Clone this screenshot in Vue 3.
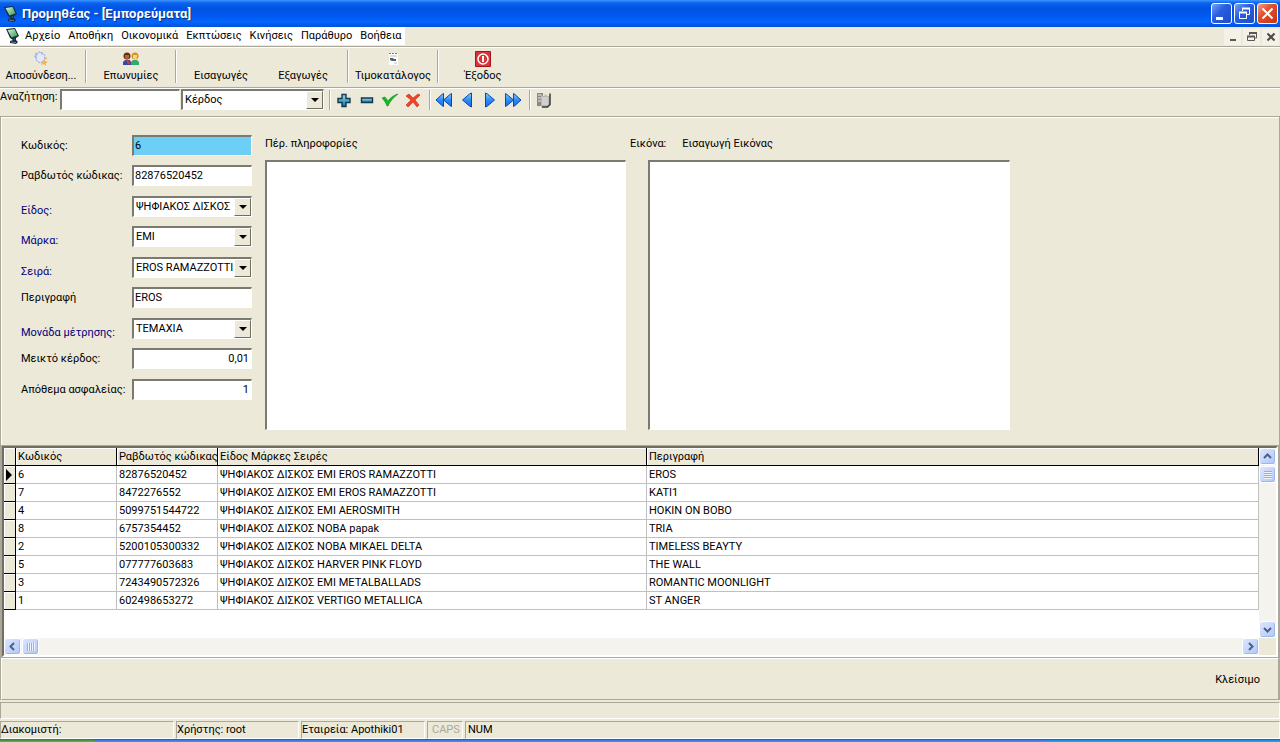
<script setup>
import { ref } from 'vue'

const menus = ['Αρχείο', 'Αποθήκη', 'Οικονομικά', 'Εκπτώσεις', 'Κινήσεις', 'Παράθυρο', 'Βοήθεια']

const search = ref('')
const searchField = ref('Κέρδος')

const fields = ref([
  { id: 'code', label: 'Κωδικός:', value: '6', kind: 'text', tone: 'active' },
  { id: 'barcode', label: 'Ραβδωτός κώδικας:', value: '82876520452', kind: 'text' },
  { id: 'type', label: 'Είδος:', value: 'ΨΗΦΙΑΚΟΣ ΔΙΣΚΟΣ', kind: 'select' },
  { id: 'brand', label: 'Μάρκα:', value: 'EMI', kind: 'select' },
  { id: 'series', label: 'Σειρά:', value: 'EROS RAMAZZOTTI', kind: 'select' },
  { id: 'description', label: 'Περιγραφή', value: 'EROS', kind: 'text' },
  { id: 'unit', label: 'Μονάδα μέτρησης:', value: 'ΤΕΜΑΧΙΑ', kind: 'select' },
  { id: 'profit', label: 'Μεικτό κέρδος:', value: '0,01', kind: 'text', tone: 'number' },
  { id: 'stock', label: 'Απόθεμα ασφαλείας:', value: '1', kind: 'text', tone: 'number' }
])
const notes = ref('')

const rows = [
  ['6', '82876520452', 'ΨΗΦΙΑΚΟΣ ΔΙΣΚΟΣ EMI EROS RAMAZZOTTI', 'EROS'],
  ['7', '8472276552', 'ΨΗΦΙΑΚΟΣ ΔΙΣΚΟΣ EMI EROS RAMAZZOTTI', 'KATI1'],
  ['4', '5099751544722', 'ΨΗΦΙΑΚΟΣ ΔΙΣΚΟΣ EMI AEROSMITH', 'HOKIN ON BOBO'],
  ['8', '6757354452', 'ΨΗΦΙΑΚΟΣ ΔΙΣΚΟΣ NOBA papak', 'TRIA'],
  ['2', '5200105300332', 'ΨΗΦΙΑΚΟΣ ΔΙΣΚΟΣ NOBA MIKAEL DELTA', 'TIMELESS BEAYTY'],
  ['5', '077777603683', 'ΨΗΦΙΑΚΟΣ ΔΙΣΚΟΣ HARVER PINK FLOYD', 'THE WALL'],
  ['3', '7243490572326', 'ΨΗΦΙΑΚΟΣ ΔΙΣΚΟΣ EMI METALBALLADS', 'ROMANTIC MOONLIGHT'],
  ['1', '602498653272', 'ΨΗΦΙΑΚΟΣ ΔΙΣΚΟΣ VERTIGO METALLICA', 'ST ANGER']
]
const selected = ref(0)
</script>

<template>
  <div class="window">
    <svg class="defs" aria-hidden="true">
      <defs>
        <linearGradient id="screen" x1="0" y1="0" x2="1" y2="1">
          <stop offset="0" stop-color="#d8f5dc" />
          <stop offset="1" stop-color="#2f9a58" />
        </linearGradient>
        <linearGradient id="steel" x1="0" y1="0" x2="0" y2="1">
          <stop offset="0" stop-color="#9fe0f4" />
          <stop offset="1" stop-color="#176a94" />
        </linearGradient>
        <linearGradient id="azure" x1="0" y1="0" x2="0" y2="1">
          <stop offset="0" stop-color="#8cd0ff" />
          <stop offset=".5" stop-color="#2c8cf5" />
          <stop offset="1" stop-color="#1a6ae8" />
        </linearGradient>
        <symbol id="logo" viewBox="0 0 16 16">
          <path d="M1 1 L10 0 L14 8 L11 10 L11 12 L13 14 L11 16 L5 15 L5 13 L8 12 L5 10 Z" fill="#1c2a35" />
          <path d="M2.500 2 L9.500 1 L12.500 7.500 L6.500 9.500 Z" fill="url(#screen)" />
          <path d="M6 14 L11 14.500" stroke="#5f86a8" />
          <path d="M9 10 L10 12" stroke="#3e6288" />
        </symbol>
      </defs>
    </svg>

    <header class="title">
      <svg class="logo"><use href="#logo" /></svg>
      <h1>Προμηθέας - [Εμπορεύματα]</h1>
      <div class="caption">
        <button aria-label="Ελαχιστοποίηση"><svg viewBox="0 0 19 19"><path d="M4 13h7v3h-7z" fill="#fff" /></svg></button>
        <button aria-label="Επαναφορά"><svg viewBox="0 0 19 19" fill="none" stroke="#fff"><path d="M7.500 7V4.500h7v6H12" /><path d="M7 4.500h8" stroke-width="2" /><path d="M4.500 8.500h7v6h-7z" /><path d="M4 8.500h8" stroke-width="2" /></svg></button>
        <button class="close" aria-label="Κλείσιμο παραθύρου"><svg viewBox="0 0 19 19"><path d="M4.500 4.500l10 10M14.500 4.500l-10 10" stroke="#fff" stroke-width="2" /></svg></button>
      </div>
    </header>

    <nav class="menubar">
      <div class="menus">
        <svg class="logo"><use href="#logo" /></svg>
        <button v-for="m in menus" :key="m">{{ m }}</button>
      </div>
      <div class="mdi">
        <button aria-label="Ελαχιστοποίηση εγγράφου"><svg viewBox="0 0 16 16"><path d="M5 10h6v2h-6z" fill="#5a5a55" /></svg></button>
        <button aria-label="Επαναφορά εγγράφου"><svg viewBox="0 0 16 16" fill="none" stroke="#5a5a55"><path d="M5.500 6V4h7v5H11M3.500 7.500h7v4h-7z" /><path d="M5 4h8M3 7.500h8" stroke-width="2" /></svg></button>
        <button aria-label="Κλείσιμο εγγράφου"><svg viewBox="0 0 16 16"><path d="M4.500 4.500l7 7M11.500 4.500l-7 7" stroke="#4a4a46" stroke-width="2" /></svg></button>
      </div>
    </nav>

    <div class="toolbar" role="toolbar" aria-label="Κύρια εργαλεία">
      <button>
        <svg viewBox="0 0 16 16"><path d="M3 3l3-2 4 1 2 3-1 5-4 2-4-3z" fill="#e3e9fb" stroke="#8797dc" stroke-dasharray="2 1" /><path d="M2 2l3 2M1 5l3 1M8 1l1 3" stroke="#a9b5ea" /><path d="M10 9l2 1 3 1-2 1v3l-2-2-3 1 1-2z" fill="#f7b64a" /><path d="M12 8l2-1" stroke="#e29a35" /></svg>
        <span>Αποσύνδεση...</span>
      </button>
      <i class="sep"></i>
      <button>
        <svg viewBox="0 0 16 16"><circle cx="4" cy="5" r="3.500" fill="#6b3010" /><path d="M2 4h4v3l-2 2-2-2z" fill="#a9663c" /><path d="M0 14v-3l2-2h5l1 2v3z" fill="#324ca8" /><path d="M4 9l2 4" stroke="#d83b2c" stroke-width="2" /><circle cx="12" cy="5" r="3.500" fill="#d99316" /><path d="M10 4h4v3l-2 2-2-2z" fill="#f6cd92" /><path d="M8 14v-3l2-2h4l2 2v3z" fill="#35a86b" /></svg>
        <span>Επωνυμίες</span>
      </button>
      <i class="sep"></i>
      <button><span>Εισαγωγές</span></button>
      <button><span>Εξαγωγές</span></button>
      <i class="sep"></i>
      <button>
        <svg viewBox="0 0 16 16"><path d="M4 2h9v12H4z" fill="#fff" /><path d="M4 2.500h9" stroke="#8c7f68" stroke-dasharray="2 1" /><path d="M5 5h7M9 12h3" stroke="#bbb" /><path d="M5 7h3l1 1h2v2H7L5 9z" fill="#4c6472" /></svg>
        <span>Τιμοκατάλογος</span>
      </button>
      <i class="sep"></i>
      <button>
        <svg viewBox="0 0 16 16"><rect width="16" height="16" rx="1" fill="#a8141c" /><rect x="1" y="1" width="14" height="14" fill="#d9343a" /><circle cx="8" cy="8" r="5" fill="none" stroke="#fff" stroke-width="1.500" /><path d="M8 5v6" stroke="#fff" stroke-width="2" /></svg>
        <span>Έξοδος</span>
      </button>
    </div>

    <div class="searchbar">
      <label class="search-label" for="search">Αναζήτηση:</label>
      <input id="search" v-model="search" class="box" type="text" />
      <span class="combo search-combo">
        <select v-model="searchField" class="box" aria-label="Πεδίο αναζήτησης"><option>Κέρδος</option></select>
        <i class="drop"></i>
      </span>
      <i class="sep"></i>
      <button aria-label="Προσθήκη"><svg viewBox="0 0 16 16"><path d="M6 2.500h4v4h4v4h-4v4H6v-4H2v-4h4z" fill="url(#steel)" stroke="#0d3a55" stroke-width="1.400" /></svg></button>
      <button aria-label="Διαγραφή"><svg viewBox="0 0 16 16"><path d="M2.500 6h11v4.500h-11z" fill="url(#steel)" stroke="#0d3a55" stroke-width="1.400" /></svg></button>
      <button aria-label="Αποδοχή"><svg viewBox="0 0 16 16"><path d="M0 6l3-1 3 4c3-4 6-6 10-7C12 5 8 9 6 14H5C4 11 2 8 0 6z" fill="#16b927" stroke="#0b8a1c" stroke-width=".6" /></svg></button>
      <button aria-label="Ακύρωση"><svg viewBox="0 0 16 16"><path d="M1 4l3-2 4 4 5-4 2 1-5 5 4 5-2 2-4-5-5 5-2-2 5-5z" fill="#f0442a" stroke="#c42612" stroke-width=".6" /></svg></button>
      <i class="sep"></i>
      <button aria-label="Πρώτη εγγραφή"><svg viewBox="0 0 16 16"><path d="M7.500 1.500v13l-1.500-1-6-5.500 6-5.500z" fill="url(#azure)" stroke="#0846b8" /><path d="M15.500 1.500v13l-1.500-1-6.500-5.500L14 2.500z" fill="url(#azure)" stroke="#0846b8" /></svg></button>
      <button aria-label="Προηγούμενη εγγραφή"><svg viewBox="0 0 16 16"><path d="M12.500 1v14l-2-1-7-6 7-6z" fill="url(#azure)" stroke="#0846b8" /></svg></button>
      <button aria-label="Επόμενη εγγραφή"><svg viewBox="0 0 16 16"><path d="M3.500 1v14l2-1 7-6-7-6z" fill="url(#azure)" stroke="#0846b8" /></svg></button>
      <button aria-label="Τελευταία εγγραφή"><svg viewBox="0 0 16 16"><path d="M8.500 1.500v13l1.500-1 6-5.500-6-5.500z" fill="url(#azure)" stroke="#0846b8" /><path d="M.5 1.500v13l1.500-1L8.500 8 2 2.500z" fill="url(#azure)" stroke="#0846b8" /></svg></button>
      <i class="sep"></i>
      <button aria-label="Εκτύπωση"><svg viewBox="0 0 16 16"><path d="M1 1h6v13H1z" fill="#8a8a82" /><path d="M2 3h3M2 6h3M2 9h3" stroke="#eee" /><path d="M5 3l3 1 2-2 1 2h3v9l-2 2H5z" fill="#b9b9b4" /><path d="M6 5h6v8H6z" fill="#d0d0cc" /><path d="M14 1.500v11l-2.500 2.500H6" fill="none" stroke="#3a3a38" stroke-width="1.500" /></svg></button>
    </div>

    <main>
      <section class="details">
        <form class="fields" @submit.prevent>
          <template v-for="f in fields" :key="f.id">
            <label :for="f.id" :class="{ lookup: f.kind === 'select' }">{{ f.label }}</label>
            <input v-if="f.kind === 'text'" :id="f.id" v-model="f.value" type="text" class="box" :class="f.tone" />
            <span v-else class="combo">
              <select :id="f.id" v-model="f.value" class="box"><option>{{ f.value }}</option></select>
              <i class="drop"></i>
            </span>
          </template>
        </form>
        <div class="notes">
          <label for="notes">Πέρ. πληροφορίες</label>
          <textarea id="notes" v-model="notes" class="box"></textarea>
        </div>
        <div class="picture">
          <div class="picture-head"><span>Εικόνα:</span><button>Εισαγωγή Εικόνας</button></div>
          <div class="box frame"></div>
        </div>
      </section>

      <section class="grid">
        <div class="sheet">
          <table>
            <colgroup><col class="c-mark" /><col class="c-code" /><col class="c-bar" /><col class="c-kind" /><col /></colgroup>
            <thead>
              <tr><th class="mark"></th><th>Κωδικός</th><th>Ραβδωτός κώδικας</th><th>Είδος Μάρκες Σειρές</th><th>Περιγραφή</th></tr>
            </thead>
            <tbody>
              <tr v-for="(r, i) in rows" :key="r[0]" @click="selected = i">
                <td class="mark"><svg v-if="i === selected" viewBox="0 0 6 12"><path d="M0 0l6 6-6 6z" /></svg></td>
                <td v-for="c in r" :key="c">{{ c }}</td>
              </tr>
            </tbody>
          </table>
        </div>
        <div class="vbar">
          <button aria-label="Πάνω"><svg viewBox="0 0 15 15"><path d="M4 9l3.500-3.500L11 9" /></svg></button>
          <i class="thumb"><b></b></i>
          <button class="end" aria-label="Κάτω"><svg viewBox="0 0 15 15"><path d="M4 6l3.500 3.500L11 6" /></svg></button>
        </div>
        <div class="hbar">
          <button aria-label="Αριστερά"><svg viewBox="0 0 15 15"><path d="M9 4L5.500 7.500 9 11" /></svg></button>
          <i class="thumb"><b></b></i>
          <button class="end" aria-label="Δεξιά"><svg viewBox="0 0 15 15"><path d="M6 4l3.500 3.500L6 11" /></svg></button>
        </div>
      </section>

      <section class="actions"><button>Κλείσιμο</button></section>
    </main>

    <div class="hint"></div>
    <footer class="status">
      <span class="s-server">Διακομιστή:</span>
      <span class="s-user">Χρήστης: root</span>
      <span class="s-company">Εταιρεία: Apothiki01</span>
      <span class="s-caps">CAPS</span>
      <span class="s-num">NUM</span>
    </footer>
    <div class="taskbar"><i class="start"></i><i class="tray"></i></div>
  </div>
</template>

<style>
body { margin: 0; background: #ece9d8; }
</style>

<style scoped>
* { box-sizing: border-box; }
.window {
  display: flex;
  flex-direction: column;
  min-height: 100vh;
  background: #ece9d8;
  color: #000;
  font-family: Roboto, "Liberation Sans", sans-serif;
  font-size: 11px;
  line-height: 14px;
}
button, input, select, textarea { font: inherit; color: inherit; }
button { display: flex; align-items: center; justify-content: center; padding: 0; border: 0; background: none; white-space: nowrap; }
.defs { position: absolute; width: 0; height: 0; }
.logo { width: 16px; height: 16px; flex: none; }

.title {
  display: flex;
  align-items: center;
  height: 27px;
  padding: 0 2px 0 3px;
  background: linear-gradient(#3d95ff 0, #0a62ee 3px, #0054e3 8px, #0058ee 16px, #0366ff 22px, #0150d8 27px);
}
.title h1 { flex: 1; margin: 0 0 0 3px; color: #fff; font: bold 13px/18px Roboto, sans-serif; text-shadow: 1px 1px #0a3080; }
.caption { display: flex; gap: 2px; }
.caption button { width: 21px; height: 21px; border: 1px solid #fff; border-radius: 3px; background: linear-gradient(135deg, #7ba2f5, #2a5fe0 40%, #1c4ccc); }
.caption .close { background: linear-gradient(135deg, #f0a088, #e0502c 40%, #c53410); }
.caption svg { width: 19px; height: 19px; }

.menubar { display: flex; justify-content: space-between; height: 20px; border-bottom: 1px solid #aca899; }
.menus { display: flex; align-items: center; gap: 8px; height: 18px; padding: 0 3px 0 5px; background: #fff; }
.menus .logo { margin-right: -4px; }
.mdi { display: flex; align-items: center; gap: 2px; padding-right: 1px; }
.mdi button { width: 17px; height: 16px; background: #f4f2e8; }
.mdi svg { width: 16px; height: 16px; }

.toolbar { display: flex; height: 41px; border-top: 1px solid #fff; border-bottom: 1px solid #aca899; }
.toolbar button { flex-direction: column; justify-content: flex-end; gap: 2px; width: 82px; padding-bottom: 4px; }
.toolbar svg { width: 16px; height: 16px; }
.sep { flex: none; width: 8px; margin: 2px 0 4px; background: linear-gradient(90deg, transparent 3px, #aca899 3px 4px, #fff 4px 5px, transparent 5px); }

.searchbar { display: flex; align-items: center; height: 28px; padding-bottom: 6px; border-top: 1px solid #fff; }
.searchbar button { width: 23px; height: 20px; padding-right: 4px; }
.searchbar svg { flex: none; width: 16px; height: 16px; }
.searchbar .sep { align-self: stretch; margin: 1px 0 0; }
.search-label { width: 60px; margin-bottom: 6px; white-space: nowrap; }
#search { width: 120px; }
.search-combo { width: 143px; margin: 0 2px 0 1px; }

.box {
  width: 100%;
  height: 21px;
  margin: 0;
  padding: 0 2px 1px 1px;
  border: solid;
  border-width: 2px 1px 1px 2px;
  border-color: #7b7a70 #fff #fff #7b7a70;
  border-radius: 0;
  outline: 0;
  background: #fff;
}
.combo { position: relative; display: block; height: 21px; }
.combo select { appearance: none; padding-left: 2px; padding-right: 18px; overflow: hidden; }
.drop {
  position: absolute;
  top: 2px;
  right: 1px;
  bottom: 1px;
  width: 17px;
  border: 1px solid;
  border-color: #fff #716f64 #716f64 #fff;
  background: #ece9d8;
  pointer-events: none;
}
.drop::after { content: ""; position: absolute; left: 4px; top: 6px; border: 4px solid transparent; border-top-color: #000; border-bottom: 0; }
.active { background: #6dcff6; }
.number { text-align: right; }

main { flex: 1; display: flex; flex-direction: column; border: 1px solid #aca899; border-bottom: 0; }
.details { display: flex; padding: 17px 12px 15px 19px; border: 1px solid #fff; border-width: 1px 0 0 1px; }
.fields { display: grid; grid-template-columns: 111px 120px; grid-auto-rows: 30px 31px; align-items: start; }
.fields label { padding-top: 4px; white-space: nowrap; }
.fields .lookup { padding-top: 8px; color: #000080; }
.notes { width: 361px; margin-left: 13px; }
.notes label { display: block; height: 25px; padding-top: 2px; }
.notes textarea { display: block; height: 270px; resize: none; }
.picture { width: 380px; margin-left: 4px; }
.picture-head { display: flex; gap: 16px; height: 25px; padding-top: 2px; align-items: flex-start; }
.frame { width: 362px; height: 270px; margin-left: 18px; }

.grid {
  flex: 1;
  display: grid;
  grid-template: 1fr 17px / 1fr 17px;
  margin: 1px 1px 0;
  border: 2px solid;
  border-color: #716f64 #fff #fff #716f64;
  outline: 1px solid #aca899;
}
.sheet { background: #fff; }
table { width: 100%; border-collapse: separate; border-spacing: 0; table-layout: fixed; }
.c-mark { width: 12px; }
.c-code { width: 101px; }
.c-bar { width: 101px; }
.c-kind { width: 429px; }
th, td { height: 18px; padding: 0 0 0 2px; text-align: left; font-weight: normal; white-space: nowrap; overflow: hidden; border-right: 1px solid #c0c0c0; border-bottom: 1px solid #c0c0c0; }
th, .mark { background: #ece9d8; border-color: #000; box-shadow: inset 1px 1px #fff; }
td.mark svg { display: block; width: 6px; height: 12px; }

.vbar, .hbar { display: flex; background: #f4f3ee; gap: 1px; }
.vbar { flex-direction: column; }
.vbar button, .hbar button, .thumb { flex: none; display: flex; align-items: center; justify-content: center; width: 17px; height: 17px; border: 1px solid #fff; border-radius: 3px; background: linear-gradient(135deg, #dbe6fe, #b2c8f8); box-shadow: inset -1px -1px #a0b5ea; }
.vbar svg, .hbar svg { width: 15px; height: 15px; fill: none; stroke: #4d6185; stroke-width: 2; }
.vbar .end { margin-top: auto; }
.hbar .end { margin-left: auto; }
.thumb b { width: 8px; height: 8px; background: repeating-linear-gradient(#8cb0f8 0 1px, #eef4fe 1px 2px); }
.hbar .thumb b { background: repeating-linear-gradient(90deg, #8cb0f8 0 1px, #eef4fe 1px 2px); }

.actions { display: flex; justify-content: flex-end; align-items: center; height: 42px; margin-top: 1px; padding: 2px 18px 0 0; border: 1px solid; border-color: #fff #aca899 #aca899 #fff; }
.hint { height: 17px; margin-top: 2px; border: 1px solid; border-color: #aca899 #fff #fff #aca899; }
.status { display: flex; gap: 2px; margin-top: 2px; }
.status span { height: 18px; padding: 1px 0 0; border: 1px solid; border-color: #aca899 #fff #fff #aca899; white-space: nowrap; }
.s-server { width: 174px; }
.s-user { width: 123px; }
.s-company { width: 124px; }
.status .s-caps { width: 36px; padding-left: 4px; color: #aca899; }
.status .s-num { flex: 1; padding-left: 2px; }
.taskbar { display: flex; height: 3px; background: linear-gradient(#1f4fc0, #3f8cf3 2px); }
.start { width: 95px; border-radius: 0 4px 0 0; background: linear-gradient(#2d7a2d, #5cb85c); }
.tray { width: 233px; margin-left: auto; background: linear-gradient(#0c59b9, #18a5f0 2px); }
</style>
